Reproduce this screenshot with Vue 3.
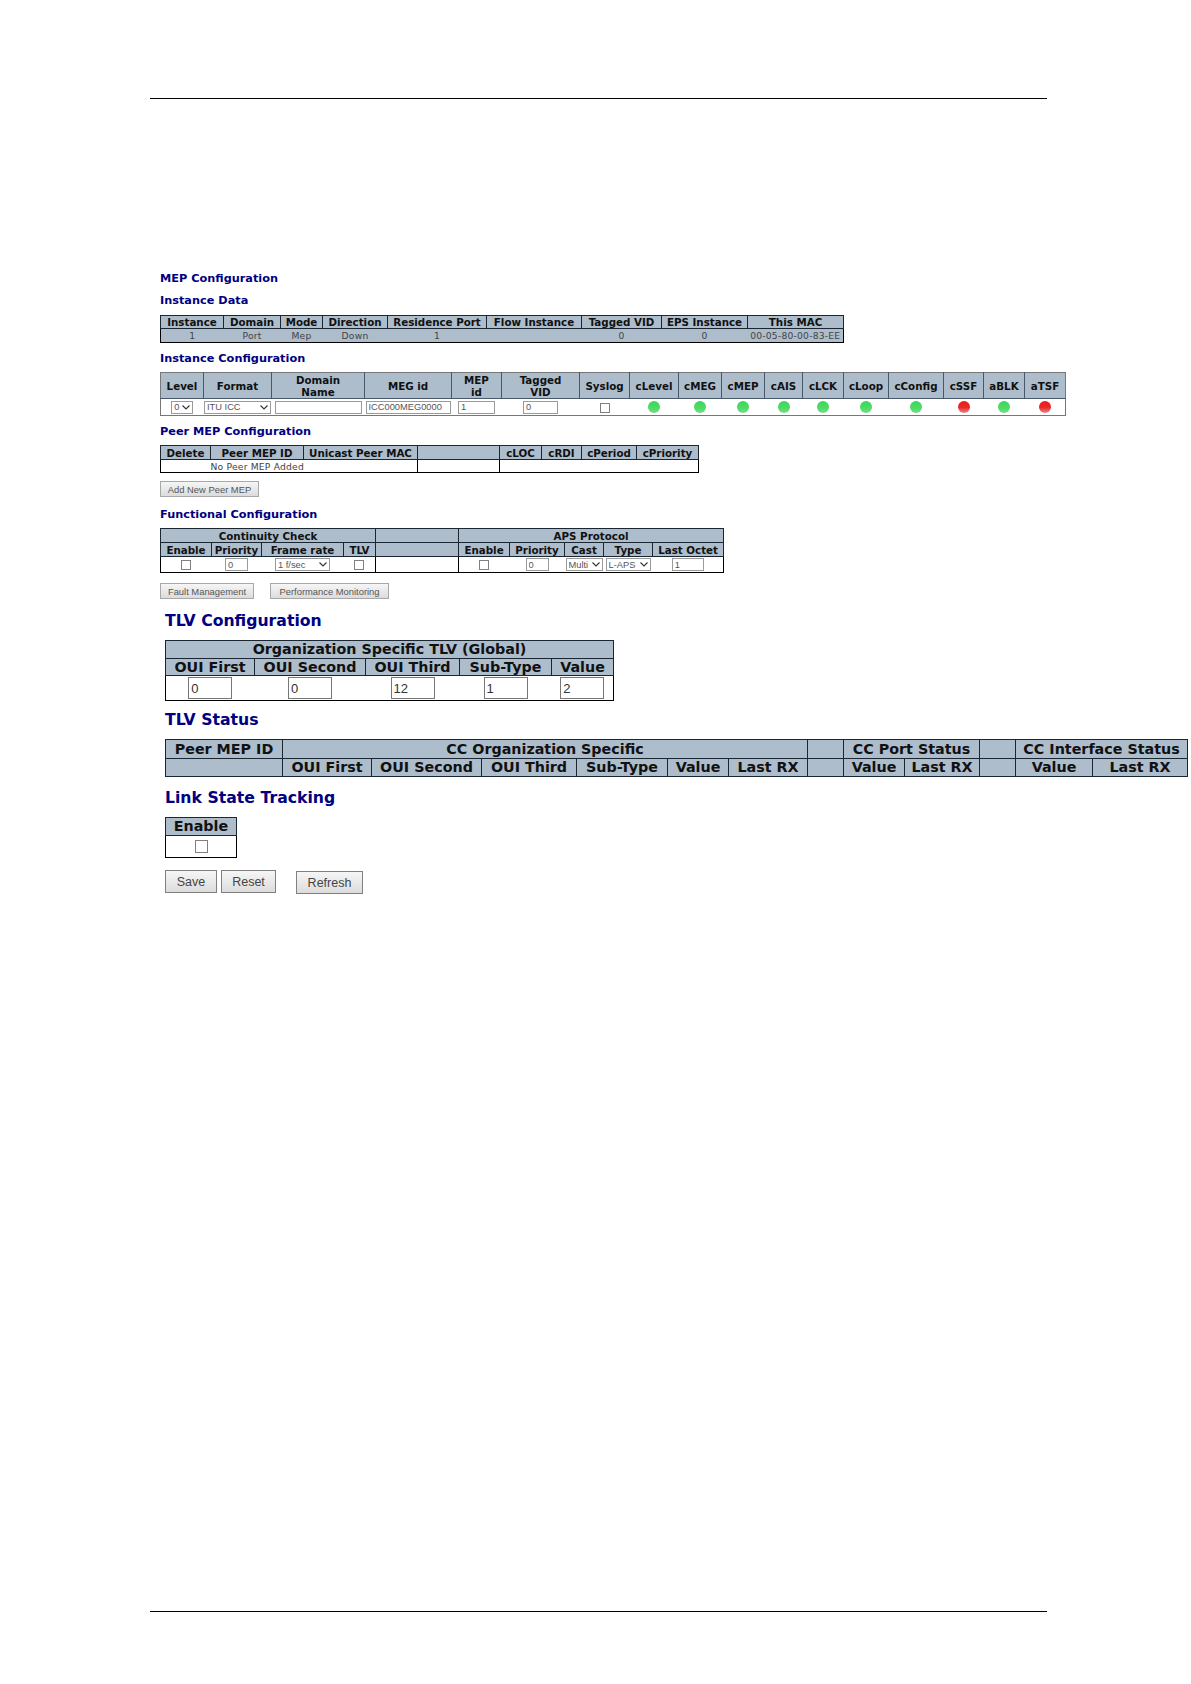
<script setup>
const colsOf = (edges) => edges.slice(1).map((x, i) => x - edges[i])

const t1Cols = colsOf([160, 223, 280, 322, 387, 486, 581, 661, 747, 843])
const t1Head = ['Instance', 'Domain', 'Mode', 'Direction', 'Residence Port', 'Flow Instance', 'Tagged VID', 'EPS Instance', 'This MAC']
const t1Row = ['1', 'Port', 'Mep', 'Down', '1', '', '0', '0', '00-05-80-00-83-EE']

const t2Cols = colsOf([160, 203, 271, 364, 451, 501, 579, 629, 678, 721, 764, 802, 843, 888, 943, 983, 1024, 1065])
const t2Head = ['Level', 'Format', 'Domain\nName', 'MEG id', 'MEP\nid', 'Tagged\nVID', 'Syslog', 'cLevel', 'cMEG', 'cMEP', 'cAIS', 'cLCK', 'cLoop', 'cConfig', 'cSSF', 'aBLK', 'aTSF']
const dots = ['g', 'g', 'g', 'g', 'g', 'g', 'g', 'r', 'g', 'r']

const t3Cols = colsOf([160, 210, 303, 417, 499, 541, 581, 636, 698])
const t3Head = ['Delete', 'Peer MEP ID', 'Unicast Peer MAC', '', 'cLOC', 'cRDI', 'cPeriod', 'cPriority']

const t4Cols = colsOf([160, 211, 261, 343, 375, 458, 509, 564, 603, 652, 723])
const t4Sub = ['Enable', 'Priority', 'Frame rate', 'TLV', '', 'Enable', 'Priority', 'Cast', 'Type', 'Last Octet']

const t5Cols = colsOf([165, 254, 365, 459, 551, 613])
const t5Head = ['OUI First', 'OUI Second', 'OUI Third', 'Sub-Type', 'Value']
const t5Vals = ['0', '0', '12', '1', '2']

const t6Cols = colsOf([165, 282, 371, 481, 576, 667, 728, 807, 843, 904, 979, 1015, 1092, 1187])
const t6Top = [
  { t: 'Peer MEP ID', s: 1 }, { t: 'CC Organization Specific', s: 6 }, { t: '', s: 1 },
  { t: 'CC Port Status', s: 2 }, { t: '', s: 1 }, { t: 'CC Interface Status', s: 2 }
]
const t6Sub = ['', 'OUI First', 'OUI Second', 'OUI Third', 'Sub-Type', 'Value', 'Last RX', '', 'Value', 'Last RX', '', 'Value', 'Last RX']
</script>

<template>
  <div class="page">
    <div class="rule rule-top"></div>

    <main class="content">
      <h2 class="hs first">MEP Configuration</h2>
      <h2 class="hs gap8">Instance Data</h2>

      <table class="grid t1 gap7">
        <colgroup><col v-for="(w, i) in t1Cols" :key="i" :style="{ width: w + 'px' }"></colgroup>
        <tr class="r13"><th v-for="h in t1Head" :key="h">{{ h }}</th></tr>
        <tr class="r14 tinted"><td v-for="(c, i) in t1Row" :key="i" class="data">{{ c }}</td></tr>
      </table>

      <h2 class="hs gap9">Instance Configuration</h2>
      <table class="grid t2 gap6">
        <colgroup><col v-for="(w, i) in t2Cols" :key="i" :style="{ width: w + 'px' }"></colgroup>
        <tr class="r26"><th v-for="h in t2Head" :key="h" class="wrap">{{ h }}</th></tr>
        <tr class="r17">
          <td><select class="sel w22"><option>0</option></select></td>
          <td><select class="sel w67"><option>ITU ICC</option></select></td>
          <td><input class="inp w87" value=""></td>
          <td><input class="inp w85" value="ICC000MEG0000"></td>
          <td><input class="inp w37" value="1"></td>
          <td><input class="inp w35" value="0"></td>
          <td><input type="checkbox" class="chk"></td>
          <td v-for="(d, i) in dots" :key="i"><span class="dot" :class="d"></span></td>
        </tr>
      </table>

      <h2 class="hs gap9">Peer MEP Configuration</h2>
      <table class="grid t3 gap6">
        <colgroup><col v-for="(w, i) in t3Cols" :key="i" :style="{ width: w + 'px' }"></colgroup>
        <tr class="r14"><th v-for="(h, i) in t3Head" :key="i">{{ h }}</th></tr>
        <tr class="r13">
          <td></td>
          <td class="data">No Peer MEP Added</td>
          <td class="ruled"></td>
          <td class="ruled"></td>
          <td colspan="4"></td>
        </tr>
      </table>

      <div class="btn-row gap8">
        <button class="btn small add">Add New Peer MEP</button>
      </div>

      <h2 class="hs gap11">Functional Configuration</h2>
      <table class="grid t4 gap6">
        <colgroup><col v-for="(w, i) in t4Cols" :key="i" :style="{ width: w + 'px' }"></colgroup>
        <tr class="r14">
          <th colspan="4">Continuity Check</th>
          <th></th>
          <th colspan="5">APS Protocol</th>
        </tr>
        <tr class="r14"><th v-for="(h, i) in t4Sub" :key="i">{{ h }}</th></tr>
        <tr class="r16">
          <td><input type="checkbox" class="chk"></td>
          <td><input class="inp w23" value="0"></td>
          <td><select class="sel w55"><option>1 f/sec</option></select></td>
          <td class="ruled"><input type="checkbox" class="chk"></td>
          <td class="ruled"></td>
          <td><input type="checkbox" class="chk"></td>
          <td><input class="inp w23" value="0"></td>
          <td><select class="sel w37"><option>Multi</option></select></td>
          <td><select class="sel w45"><option>L-APS</option></select></td>
          <td><input class="inp w32" value="1"></td>
        </tr>
      </table>

      <div class="btn-row gap10">
        <button class="btn small fault">Fault Management</button>
        <button class="btn small perf">Performance Monitoring</button>
      </div>

      <div class="wide">
        <h2 class="hl gap12">TLV Configuration</h2>
        <table class="grid big t5 gap9">
          <colgroup><col v-for="(w, i) in t5Cols" :key="i" :style="{ width: w + 'px' }"></colgroup>
          <tr class="r18"><th colspan="5">Organization Specific TLV (Global)</th></tr>
          <tr class="r17"><th v-for="h in t5Head" :key="h">{{ h }}</th></tr>
          <tr class="r25"><td v-for="(v, i) in t5Vals" :key="i"><input class="inp large" :value="v"></td></tr>
        </table>

        <h2 class="hl gap9">TLV Status</h2>
        <table class="grid big t6 gap9">
          <colgroup><col v-for="(w, i) in t6Cols" :key="i" :style="{ width: w + 'px' }"></colgroup>
          <tr class="r19"><th v-for="(c, i) in t6Top" :key="i" :colspan="c.s">{{ c.t }}</th></tr>
          <tr class="r18"><th v-for="(h, i) in t6Sub" :key="i">{{ h }}</th></tr>
        </table>

        <h2 class="hl gap11">Link State Tracking</h2>
        <table class="grid big t7 gap9">
          <tr class="r18"><th>Enable</th></tr>
          <tr class="r22"><td><input type="checkbox" class="chk bigchk"></td></tr>
        </table>

        <div class="form-row">
          <button class="btn large save">Save</button>
          <button class="btn large reset">Reset</button>
          <button class="btn large refresh">Refresh</button>
        </div>
      </div>
    </main>

    <div class="rule rule-bottom"></div>
  </div>
</template>

<style scoped>
.page {
  width: 1191px;
  height: 1684px;
  display: flex;
  flex-direction: column;
  background: #fff;
  overflow: hidden;
}
.rule { height: 1px; margin-left: 150px; width: 897px; background: #000; flex: none; }
.rule-top { margin-top: 98px; }
.rule-bottom { margin-bottom: 72px; }
.content { flex: 1; padding: 173px 0 0 160px; }

.hs, .hl {
  margin: 0;
  color: #000080;
  font-family: "DejaVu Sans", Verdana, sans-serif;
  font-weight: 700;
}
.hs { font-size: 11.3px; line-height: 14px; height: 14px; }
.hl { font-size: 15.7px; line-height: 20px; height: 20px; }
.wide { margin-left: 5px; }

.first { margin-top: 0; }
.gap6 { margin-top: 6px; }
.gap7 { margin-top: 7px; }
.gap8 { margin-top: 8px; }
.gap9 { margin-top: 9px; }
.gap10 { margin-top: 10px; }
.gap11 { margin-top: 11px; }
.gap12 { margin-top: 12px; }

.grid {
  border-collapse: collapse;
  table-layout: fixed;
  width: 0;
  border: 1px solid #000;
  font-family: "DejaVu Sans", Verdana, sans-serif;
  font-size: 10.3px;
}
.grid th {
  background: #adbdcc;
  border: 1px solid #1a2733;
  padding: 0;
  font-weight: 700;
  color: #111;
  line-height: 12px;
  text-align: center;
  white-space: nowrap;
  overflow: visible;
}
.grid td {
  padding: 0;
  text-align: center;
  vertical-align: middle;
  white-space: nowrap;
  line-height: 11px;
}
.data { font-size: 9.2px; color: #444; letter-spacing: 0.2px; }
.tinted td { background: #adbdcc; border-top: 1px solid #7a8b9a; }
.grid td.ruled { border-right: 1px solid #000; }
.wrap { white-space: pre-line !important; }

.t2 { border-color: #777; }
.t2 th { border-color: #48586a; border-top-color: #777; }
.t2 th:first-child { border-left-color: #777; }
.t2 th:last-child { border-right-color: #777; }
.t2 tr:last-child td { border-bottom: 1px solid #777; }

.big { font-size: 14.3px; }
.big th { line-height: 15px; }
.t7 { width: 72px; }

.r13 { height: 13px; }
.r14 { height: 14px; }
.r16 { height: 16px; }
.r17 { height: 17px; }
.r18 { height: 18px; }
.r19 { height: 19px; }
.r22 { height: 22px; }
.r25 { height: 25px; }
.r26 { height: 26px; }

.inp, .sel {
  box-sizing: border-box;
  margin: 0;
  padding: 0 0 0 2px;
  height: 13px;
  border: 1px solid #9a9a9a;
  border-radius: 0;
  background-color: #fff;
  font-family: "Liberation Sans", Arial, sans-serif;
  font-size: 9.3px;
  color: #555;
  vertical-align: middle;
}
.sel {
  appearance: none;
  -webkit-appearance: none;
  padding: 0 0 0 2px;
  background-image: url("data:image/svg+xml,%3Csvg xmlns='http://www.w3.org/2000/svg' width='8' height='5' viewBox='0 0 8 5'%3E%3Cpath d='M.5.5 4 4 7.500.5' fill='none' stroke='%23333' stroke-width='1.100'/%3E%3C/svg%3E");
  background-repeat: no-repeat;
  background-position: right 2px center;
}
.w22 { width: 22px; }
.w23 { width: 23px; }
.w32 { width: 32px; }
.w35 { width: 35px; }
.w37 { width: 37px; }
.w45 { width: 45px; }
.w55 { width: 55px; }
.w67 { width: 67px; }
.w85 { width: 85px; }
.w87 { width: 87px; }
.inp.large {
  width: 44px;
  height: 22px;
  font-size: 13px;
  color: #333;
  border-color: #777;
}

.chk {
  appearance: none;
  -webkit-appearance: none;
  box-sizing: border-box;
  display: inline-block;
  width: 10px;
  height: 10px;
  margin: 0;
  border: 1px solid #808080;
  background: #fff;
  vertical-align: middle;
}
.bigchk { width: 13px; height: 13px; }

.dot {
  display: inline-block;
  width: 12px;
  height: 12px;
  border-radius: 50%;
  vertical-align: middle;
}
.dot.g { background: linear-gradient(#38d858, #4cdc66 60%, #7fd88f); }
.dot.r { background: linear-gradient(#f01818, #ea2a2a 55%, #e88a8a); }

.btn-row { display: flex; }
.btn {
  box-sizing: border-box;
  margin: 0;
  padding: 0;
  border: 1px solid #a8a8a8;
  background: linear-gradient(#f6f6f6, #dcdcdc);
  font-family: "Liberation Sans", Arial, sans-serif;
  color: #555;
}
.btn.small { height: 16px; font-size: 9.4px; }
.add { width: 99px; }
.fault { width: 94px; }
.perf { width: 119px; margin-left: 16px; }

.form-row { display: flex; align-items: flex-start; margin-top: 12px; }
.btn.large { height: 23px; font-size: 12.5px; color: #444; border-color: #808080; }
.save { width: 52px; }
.reset { width: 55px; margin-left: 4px; }
.refresh { width: 67px; margin-left: 20px; margin-top: 1px; }
</style>

<style>
html, body { margin: 0; background: #fff; }
</style>
